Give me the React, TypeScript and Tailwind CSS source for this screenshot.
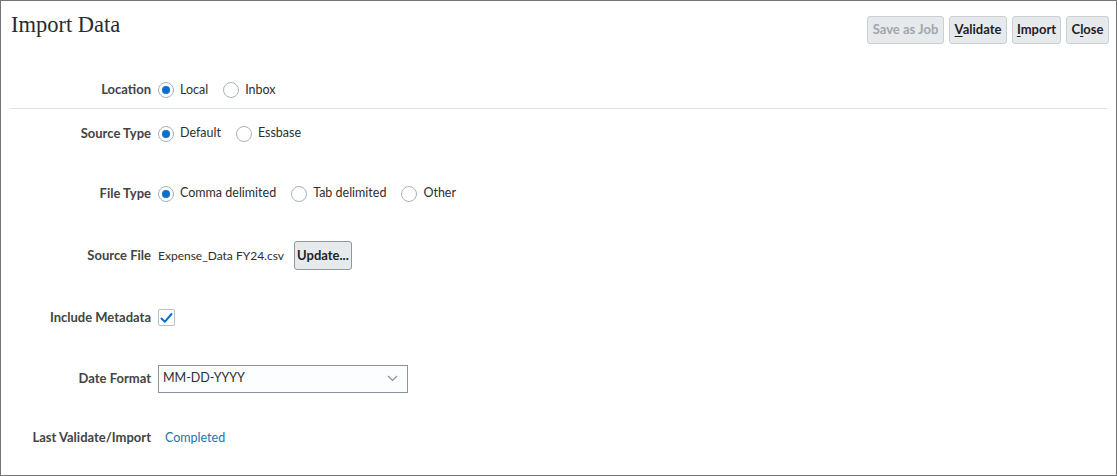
import React from "react";

const font = { fontFamily: "Lato, 'Noto Sans', sans-serif" };

function Radio({ checked, label }: { checked?: boolean; label: string }) {
  return (
    <div className="flex items-center">
      <span className="w-[16px] h-[16px] rounded-full border border-[#a9b2bb] bg-white flex items-center justify-center shrink-0">
        {checked && <span className="w-[8px] h-[8px] rounded-full bg-[#0a6fd1]" />}
      </span>
      <span className="ml-[6px] text-[12.5px] text-[#2e2e2e]">{label}</span>
    </div>
  );
}

function Row({ label, h, children, border }: { label: string; h: string; children: React.ReactNode; border?: boolean }) {
  return (
    <div className={`flex items-center ${h} ${border ? "border-b border-[#d9e1e7]" : ""}`}>
      <div className="w-[141px] text-right text-[13px] font-bold text-[#444] shrink-0">{label}</div>
      <div className="ml-[7px] flex items-center">{children}</div>
    </div>
  );
}

function Btn({ children, disabled, w }: { children: React.ReactNode; disabled?: boolean; w: string }) {
  return (
    <button
      className={`h-[28px] ${w} rounded-[3px] border border-[#c8d0d6] bg-[#e6eaed] text-[13px] font-bold ${disabled ? "text-[#a2a6a9]" : "text-[#1f1f1f]"}`}
    >
      {children}
    </button>
  );
}

export default function App() {
  return (
    <div style={font} className="w-[1117px] h-[476px] bg-white border-[1.5px] border-[#747474] box-border">
      <div className="h-[71px] flex justify-between">
        <div
          className="pl-[10px] pt-[7px] text-[22.5px] text-[#2b2b2b]"
          style={{ fontFamily: "'Liberation Serif', serif" }}
        >
          Import Data
        </div>
        <div className="flex gap-[5px] pt-[15px] pr-[7px]">
          <Btn disabled w="w-[77px]">Save as Job</Btn>
          <Btn w="w-[58px]">
            <span className="underline underline-offset-2">V</span>alidate
          </Btn>
          <Btn w="w-[49px]">
            <span className="underline underline-offset-2">I</span>mport
          </Btn>
          <Btn w="w-[43px]">
            C<span className="underline underline-offset-2">l</span>ose
          </Btn>
        </div>
      </div>
      <div className="mx-[9px]">
        <Row label="Location" h="h-[37px]" border>
          <div className="flex gap-[15px]">
            <Radio checked label="Local" />
            <Radio label="Inbox" />
          </div>
        </Row>
        <Row label="Source Type" h="h-[49px]">
          <div className="flex gap-[15px]">
            <Radio checked label="Default" />
            <Radio label="Essbase" />
          </div>
        </Row>
        <Row label="File Type" h="h-[71px]">
          <div className="flex gap-[15px]">
            <Radio checked label="Comma delimited" />
            <Radio label="Tab delimited" />
            <Radio label="Other" />
          </div>
        </Row>
        <Row label="Source File" h="h-[53px]">
          <span className="text-[12px] text-[#2e2e2e]">Expense_Data FY24.csv</span>
          <button className="ml-[10px] h-[29px] w-[58px] rounded-[3px] border border-[#8f989f] bg-[#e6eaed] text-[13px] font-bold text-[#1f1f1f]">
            Update...
          </button>
        </Row>
        <Row label="Include Metadata" h="h-[71px]">
          <span className="w-[17px] h-[17px] border border-[#b8c1c9] rounded-[2px] bg-white flex items-center justify-center">
            <svg width="13" height="12" viewBox="0 0 13 12">
              <path d="M1.5 6.5 L4.8 9.8 L11.5 2" fill="none" stroke="#0a6fd1" strokeWidth="2" strokeLinecap="round" strokeLinejoin="round" />
            </svg>
          </span>
        </Row>
        <Row label="Date Format" h="h-[51px]">
          <div className="w-[250px] h-[28px] border border-[#8c949b] bg-[#fcfdfe] flex items-center justify-between pl-[4px] pr-[9px]">
            <span className="text-[12.5px] text-[#2e2e2e]">MM-DD-YYYY</span>
            <svg width="11" height="7" viewBox="0 0 11 7">
              <path d="M1 1 L5.5 5.5 L10 1" fill="none" stroke="#8a8f94" strokeWidth="1.1" />
            </svg>
          </div>
        </Row>
        <Row label="Last Validate/Import" h="h-[68px]">
          <span className="ml-[7px] text-[12.5px] text-[#1f6fb5]">Completed</span>
        </Row>
      </div>
    </div>
  );
}
